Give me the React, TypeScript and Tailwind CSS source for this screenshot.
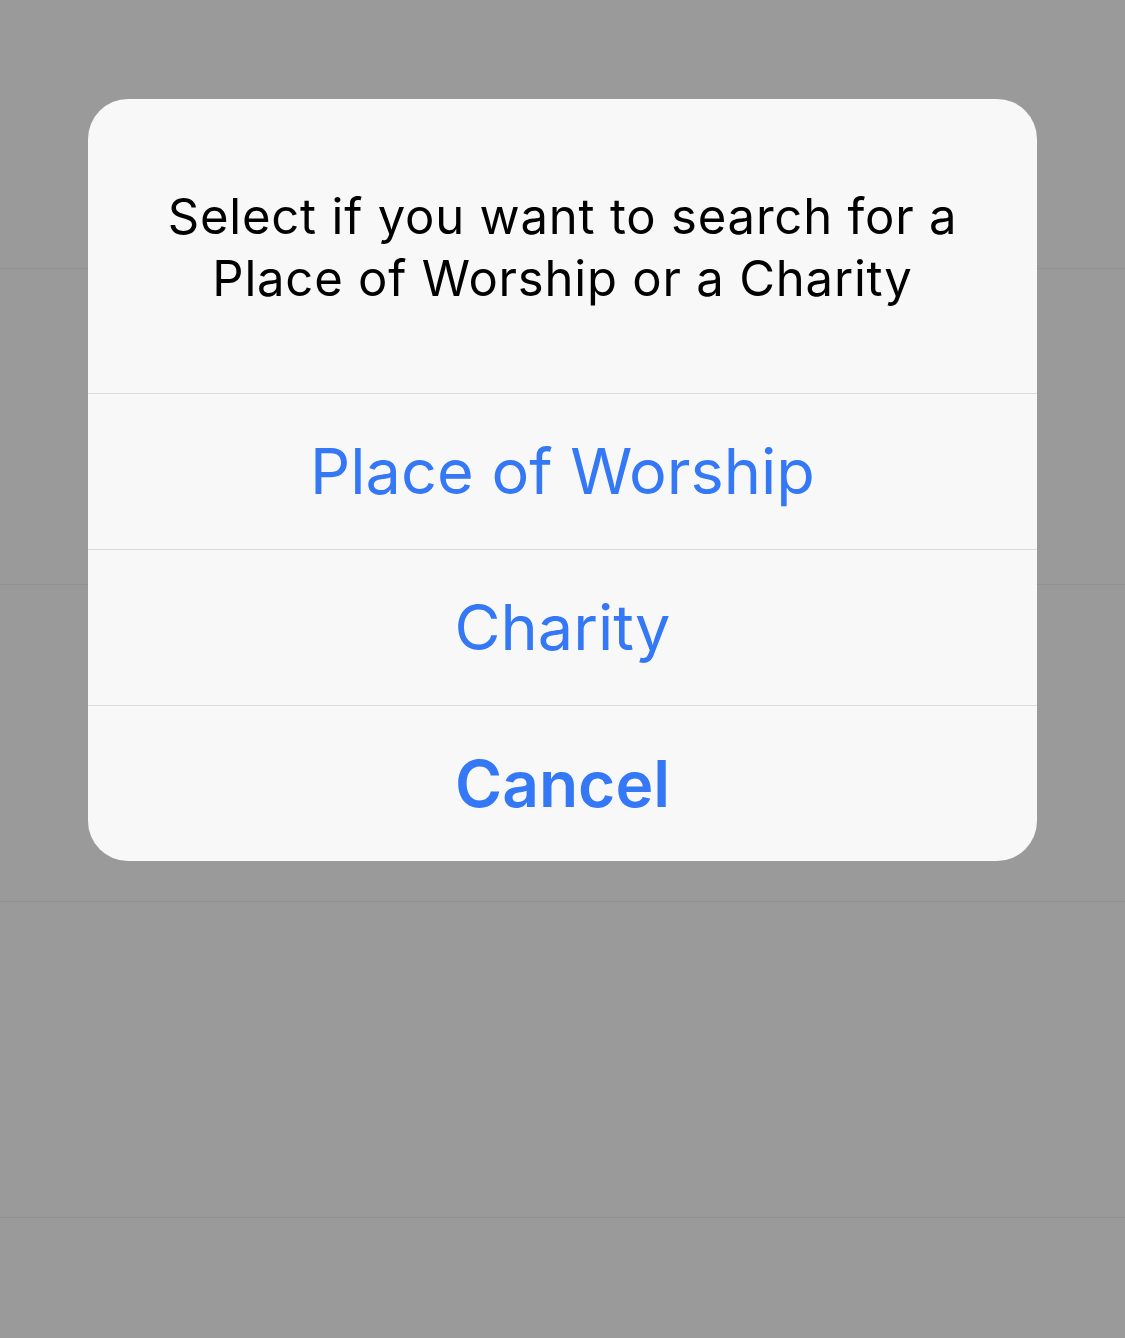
export default function App() {
  return (
    <div className="relative w-[1125px] h-[1338px] overflow-hidden bg-[#9a9a9a] font-['Inter','Noto_Sans',sans-serif]">
      <div className="flex flex-col">
        <div className="h-[269px] border-b border-[#929292]" />
        <div className="h-[316px] border-b border-[#929292]" />
        <div className="h-[317px] border-b border-[#929292]" />
        <div className="h-[316px] border-b border-[#929292]" />
      </div>

      <div className="absolute left-[88px] top-[99px] w-[949px] rounded-[40px] bg-[#f8f8f8] overflow-hidden">
        <div className="h-[294px] flex items-center justify-center px-8 pt-[4px]">
          <p className="text-center text-[49px] leading-[62px] text-black tracking-[0.8px] whitespace-nowrap">
            Select if you want to search for a
            <br />
            Place of Worship or a Charity
          </p>
        </div>
        <button
          type="button"
          className="w-full h-[156px] border-t border-[#dcdcdc] flex items-center justify-center text-[63px] text-[#3478f6]"
        >
          Place of Worship
        </button>
        <button
          type="button"
          className="w-full h-[156px] border-t border-[#dcdcdc] flex items-center justify-center text-[63px] text-[#3478f6]"
        >
          Charity
        </button>
        <button
          type="button"
          className="w-full h-[156px] border-t border-[#dcdcdc] flex items-center justify-center text-[64px] font-semibold text-[#3478f6]"
        >
          Cancel
        </button>
      </div>
    </div>
  );
}
